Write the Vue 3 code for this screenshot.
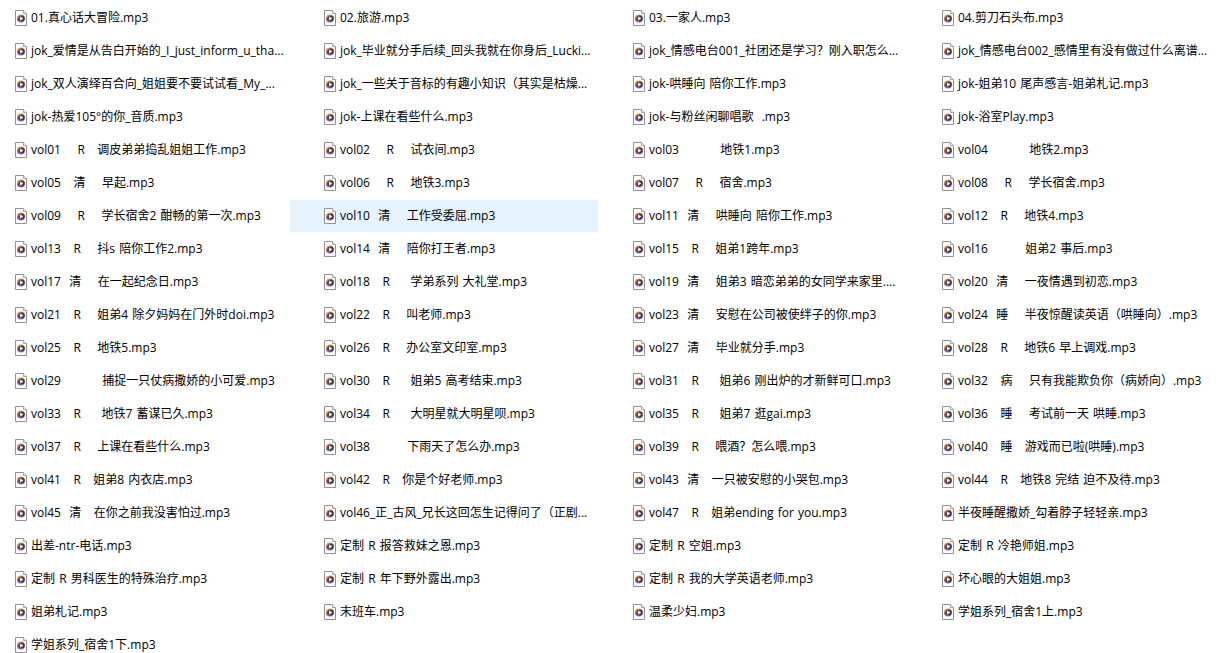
<script setup>
const files = [
  '01.真心话大冒险.mp3', '02.旅游.mp3', '03.一家人.mp3', '04.剪刀石头布.mp3',
  'jok_爱情是从告白开始的_I_just_inform_u_tha...', 'jok_毕业就分手后续_回头我就在你身后_Lucki...', 'jok_情感电台001_社团还是学习？刚入职怎么...', 'jok_情感电台002_感情里有没有做过什么离谱...',
  'jok_双人演绎百合向_姐姐要不要试试看_My_...', 'jok_一些关于音标的有趣小知识（其实是枯燥...', 'jok-哄睡向 陪你工作.mp3', 'jok-姐弟10 尾声感言-姐弟札记.mp3',
  'jok-热爱105°的你_音质.mp3', 'jok-上课在看些什么.mp3', 'jok-与粉丝闲聊唱歌  .mp3', 'jok-浴室Play.mp3',
  'vol01    R   调皮弟弟捣乱姐姐工作.mp3', 'vol02    R    试衣间.mp3', 'vol03          地铁1.mp3', 'vol04          地铁2.mp3',
  'vol05   清    早起.mp3', 'vol06    R    地铁3.mp3', 'vol07    R    宿舍.mp3', 'vol08    R    学长宿舍.mp3',
  'vol09    R    学长宿舍2 酣畅的第一次.mp3', 'vol10  清    工作受委屈.mp3', 'vol11  清    哄睡向 陪你工作.mp3', 'vol12   R    地铁4.mp3',
  'vol13   R    抖s 陪你工作2.mp3', 'vol14  清    陪你打王者.mp3', 'vol15   R    姐弟1跨年.mp3', 'vol16         姐弟2 事后.mp3',
  'vol17  清    在一起纪念日.mp3', 'vol18   R     学弟系列 大礼堂.mp3', 'vol19  清    姐弟3 暗恋弟弟的女同学来家里....', 'vol20  清    一夜情遇到初恋.mp3',
  'vol21   R    姐弟4 除夕妈妈在门外时doi.mp3', 'vol22   R    叫老师.mp3', 'vol23  清    安慰在公司被使绊子的你.mp3', 'vol24  睡    半夜惊醒读英语（哄睡向）.mp3',
  'vol25   R    地铁5.mp3', 'vol26   R    办公室文印室.mp3', 'vol27  清    毕业就分手.mp3', 'vol28   R    地铁6 早上调戏.mp3',
  'vol29          捕捉一只仗病撒娇的小可爱.mp3', 'vol30   R     姐弟5 高考结束.mp3', 'vol31   R     姐弟6 刚出炉的才新鲜可口.mp3', 'vol32   病    只有我能欺负你（病娇向）.mp3',
  'vol33   R     地铁7 蓄谋已久.mp3', 'vol34   R     大明星就大明星呗.mp3', 'vol35   R     姐弟7 逛gai.mp3', 'vol36   睡    考试前一天 哄睡.mp3',
  'vol37   R    上课在看些什么.mp3', 'vol38         下雨天了怎么办.mp3', 'vol39   R    喂酒？怎么喂.mp3', 'vol40   睡   游戏而已啦(哄睡).mp3',
  'vol41   R   姐弟8 内衣店.mp3', 'vol42   R   你是个好老师.mp3', 'vol43  清   一只被安慰的小哭包.mp3', 'vol44   R   地铁8 完结 迫不及待.mp3',
  'vol45  清   在你之前我没害怕过.mp3', 'vol46_正_古风_兄长这回怎生记得问了（正剧...', 'vol47   R   姐弟ending for you.mp3', '半夜睡醒撒娇_勾着脖子轻轻亲.mp3',
  '出差-ntr-电话.mp3', '定制 R 报答救妹之恩.mp3', '定制 R 空姐.mp3', '定制 R 冷艳师姐.mp3',
  '定制 R 男科医生的特殊治疗.mp3', '定制 R 年下野外露出.mp3', '定制 R 我的大学英语老师.mp3', '坏心眼的大姐姐.mp3',
  '姐弟札记.mp3', '末班车.mp3', '温柔少妇.mp3', '学姐系列_宿舍1上.mp3',
  '学姐系列_宿舍1下.mp3',
].map((name) => ({ name, parts: name.split(/( +)/) }))

const highlighted = 25
</script>

<template>
  <main class="pane">
    <svg class="defs" width="0" height="0" aria-hidden="true">
      <defs>
        <linearGradient id="disc" x1="0" y1="0" x2="0.25" y2="1">
          <stop offset="0" stop-color="#f5a064" />
          <stop offset="0.4" stop-color="#e07a3c" />
          <stop offset="0.65" stop-color="#7a5088" />
          <stop offset="1" stop-color="#a568bd" />
        </linearGradient>
        <symbol id="audio-file" viewBox="0 0 12 16">
          <path d="M.5 .5H8.5L11.5 3.5V15.5H.5Z" fill="#fff" stroke="#919191" />
          <path d="M8.5 .5V3.5H11.5" fill="#f4f4f4" stroke="#a5a5a5" />
          <circle cx="6" cy="8.5" r="4" fill="url(#disc)" />
          <circle cx="6.5" cy="8.5" r="3" fill="#373b45" />
          <path d="M5.3 6.7V10.3L8 8.5Z" fill="#fff" stroke="#fff" stroke-width=".5" />
        </symbol>
      </defs>
    </svg>
    <ul class="files">
      <li v-for="(file, i) in files" :key="file.name" class="file" :class="{ highlighted: i === highlighted }">
        <svg class="icon" aria-hidden="true"><use href="#audio-file" /></svg>
        <span class="name"><span v-for="(part, k) in file.parts" :key="k" :class="{ space: k % 2 }">{{ part }}</span></span>
      </li>
    </ul>
  </main>
</template>

<style>
html,
body {
  overflow: hidden;
  background: #fff;
}
</style>

<style scoped>
.pane {
  height: 100vh;
  overflow: hidden;
  color: #000;
  font-family: "Open Sans", "Noto Sans CJK SC", sans-serif;
  font-size: 12px;
  line-height: 16px;
}
.defs {
  position: absolute;
}
.files {
  display: grid;
  grid-template-columns: repeat(4, minmax(0, 1fr));
  gap: 1px;
  margin: 0 0 0 -19px;
  padding: 2px 0 0;
  list-style: none;
}
.file {
  display: flex;
  align-items: center;
  gap: 4px;
  height: 32px;
  padding-left: 34px;
  border-radius: 1px;
}
.file.highlighted,
.file:hover {
  background: #e5f3ff;
}
.icon {
  flex: none;
  width: 12px;
  height: 16px;
}
.name {
  white-space: pre;
}
.space {
  font-family: "DejaVu Sans", sans-serif;
  font-size: 13px;
  line-height: 1;
}
</style>
